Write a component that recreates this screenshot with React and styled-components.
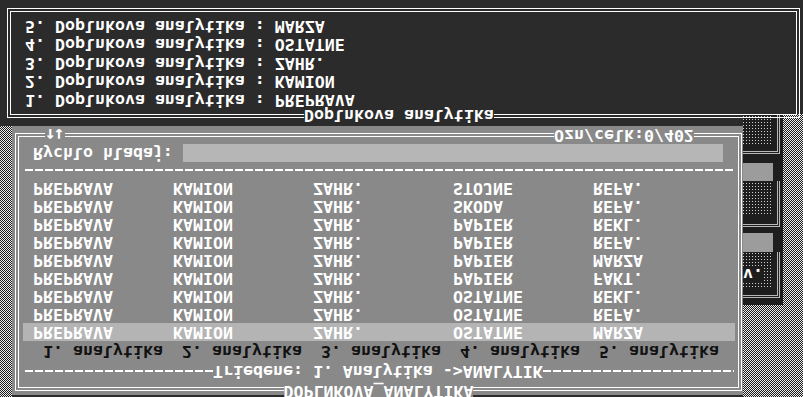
import React from "react";
import styled, { createGlobalStyle } from "styled-components";

const GlobalStyle = createGlobalStyle`
  html, body {
    margin: 0;
    padding: 0;
    background: #2b2b2b;
  }
  body {
    width: 803px;
    height: 397px;
    overflow: hidden;
  }
`;

const rows = [
  ["PREPRAVA", "KAMION", "ZAHR.", "OSTATNE", "MARZA"],
  ["PREPRAVA", "KAMION", "ZAHR.", "OSTATNE", "REFA."],
  ["PREPRAVA", "KAMION", "ZAHR.", "OSTATNE", "REKL."],
  ["PREPRAVA", "KAMION", "ZAHR.", "PAPIER", "FAKT."],
  ["PREPRAVA", "KAMION", "ZAHR.", "PAPIER", "MARZA"],
  ["PREPRAVA", "KAMION", "ZAHR.", "PAPIER", "REFA."],
  ["PREPRAVA", "KAMION", "ZAHR.", "PAPIER", "REKL."],
  ["PREPRAVA", "KAMION", "ZAHR.", "SKODA", "REFA."],
  ["PREPRAVA", "KAMION", "ZAHR.", "STOJNE", "REFA."],
];

const picked = ["PREPRAVA", "KAMION", "ZAHR.", "OSTATNE", "MARZA"];

const App = () => {
  return (
    <>
      <GlobalStyle />
      {/* the whole text screen is shown upside down */}
      <Screen>
        <Desktop>
          <Dither $w={12} />
          <Dialog>
            <Frame>
              <BorderTitle $top={-10} $center $bg="#898989">
                DOPLNKOVA_ANALYTIKA
              </BorderTitle>
              <FrameBody $pad="7px 0 0 0">
                <SortRow>
                  <DashRule $w={188} />
                  <span>Triedene: 1. Analytika -&gt;ANALYTIK</span>
                  <DashRule $grow />
                </SortRow>
                <HeaderRow>
                  {[1, 2, 3, 4, 5].map((n) => (
                    <span key={n}>{n}. analytika</span>
                  ))}
                </HeaderRow>
                <DataList>
                  {rows.map((r, i) => (
                    <DataRow key={i} $active={i === 0}>
                      {r.map((c, j) => (
                        <span key={j}>{c}</span>
                      ))}
                    </DataRow>
                  ))}
                </DataList>
                <DashRule $m="8px 4px 0 6px" />
                <SearchRow>
                  <SearchLabel>Rychlo hladaj:</SearchLabel>
                  <SearchField />
                </SearchRow>
              </FrameBody>
              <BorderTitle $bottom={-8} $left={29} $bg="#898989">
                <Arrows>↑↓</Arrows>
              </BorderTitle>
              <BorderTitle $bottom={-8} $left={538} $bg="#898989">
                Ozn/celk:0/402
              </BorderTitle>
            </Frame>
          </Dialog>
          <RightSide>
            <Dither $h={92} />
            <BackRow>
              <ButtonStack>
                <BackFrame $gap={7} $pad={8}>
                  <Patch $h={35}>
                    <PatchText>v.</PatchText>
                  </Patch>
                </BackFrame>
                <KeyBar $h={19} />
                <BackFrame $gap={6} $pad={10}>
                  <Patch $h={33} />
                </BackFrame>
                <KeyBar $h={18} />
                <BackFrame $gap={9} $pad={7}>
                  <Patch $h={30} />
                </BackFrame>
              </ButtonStack>
              <Dither $grow />
            </BackRow>
          </RightSide>
        </Desktop>
        <InfoPanel>
          <Frame>
            <BorderTitle $top={-7} $left={296} $bg="#2b2b2b">
              Doplnkova analytika
            </BorderTitle>
            <FrameBody $pad="5px 0 0 14px">
              {picked.map((v, i) => (
                <InfoLine key={i}>
                  {i + 1}. Doplnkova analytika : {v}
                </InfoLine>
              ))}
            </FrameBody>
          </Frame>
        </InfoPanel>
      </Screen>
    </>
  );
};

const Screen = styled.div`
  width: 803px;
  height: 397px;
  overflow: hidden;
  display: flex;
  flex-direction: column;
  background: #2b2b2b;
  color: #fff;
  font-family: "DejaVu Sans Mono", "Liberation Mono", monospace;
  font-size: 16.6px;
  font-weight: bold;
  line-height: 18px;
  white-space: pre;
  transform: scaleY(-1);
`;

const Desktop = styled.div`
  height: 271px;
  flex-shrink: 0;
  display: flex;
`;

const Dither = styled.div`
  flex: ${(p) => (p.$grow ? 1 : "none")};
  width: ${(p) => (p.$w ? `${p.$w}px` : "auto")};
  height: ${(p) => (p.$h ? `${p.$h}px` : "auto")};
  background-color: #1c1c1c;
  background-image: conic-gradient(
    #ececec 25%,
    transparent 0 50%,
    #ececec 0 75%,
    transparent 0
  );
  background-size: 2px 2px;
`;

const Dialog = styled.div`
  box-sizing: border-box;
  width: 731px;
  height: 269px;
  margin-top: 2px;
  padding: 4px 3px 7px 3px;
  background: #898989;
  display: flex;
`;

const Frame = styled.div`
  position: relative;
  flex: 1;
  display: flex;
  border: 1px solid #fff;
  padding: 2px;
`;

const FrameBody = styled.div`
  flex: 1;
  display: flex;
  flex-direction: column;
  border: 1px solid #fff;
  padding: ${(p) => p.$pad};
`;

const BorderTitle = styled.div`
  position: absolute;
  height: 18px;
  background: ${(p) => p.$bg};
  color: #fff;
  ${(p) => (p.$top !== undefined ? `top: ${p.$top}px;` : "")}
  ${(p) => (p.$bottom !== undefined ? `bottom: ${p.$bottom}px;` : "")}
  ${(p) =>
    p.$center
      ? "left: 50%; transform: translateX(-50%);"
      : `left: ${p.$left}px;`}
`;

const Arrows = styled.span`
  display: inline-block;
  width: 20px;
  height: 18px;
  font-size: 18px;
  line-height: 18px;
  letter-spacing: -2px;
`;

const SortRow = styled.div`
  display: flex;
  align-items: center;
  height: 18px;
  margin: 0 4px 0 6px;
`;

const DashRule = styled.div`
  flex: ${(p) => (p.$grow ? 1 : "none")};
  width: ${(p) => (p.$w ? `${p.$w}px` : "auto")};
  height: 2px;
  margin: ${(p) => p.$m || "0"};
  background: repeating-linear-gradient(
    90deg,
    #fff 0 8px,
    transparent 8px 10px
  );
`;

const HeaderRow = styled.div`
  display: grid;
  grid-template-columns: repeat(5, 139px);
  height: 18px;
  margin: 2px 0 0 24px;
  color: #111;
`;

const DataList = styled.div`
  display: flex;
  flex-direction: column;
  margin-top: 1px;
`;

const DataRow = styled.div`
  display: grid;
  grid-template-columns: repeat(5, 140px);
  height: 18px;
  margin: 0 3px 0 4px;
  padding-left: 10px;
  background: ${(p) => (p.$active ? "#b4b4b4" : "transparent")};
`;

const SearchRow = styled.div`
  display: flex;
  height: 18px;
  margin: 7px 0 0 14px;
`;

const SearchLabel = styled.span`
  width: 150px;
`;

const SearchField = styled.div`
  width: 540px;
  background: #b6b6b6;
`;

const RightSide = styled.div`
  width: 60px;
  display: flex;
  flex-direction: column;
`;

const BackRow = styled.div`
  flex: 1;
  display: flex;
`;

const ButtonStack = styled.div`
  width: 40px;
  overflow: hidden;
  background: #1e1e1e;
  display: flex;
  flex-direction: column;
`;

const BackFrame = styled.div`
  flex-shrink: 0;
  width: 34px;
  margin-top: ${(p) => p.$gap}px;
  padding-top: ${(p) => p.$pad}px;
  border-top: 3px double #b8b8b8;
  border-right: 3px double #b8b8b8;
`;

const Patch = styled.div`
  width: 29px;
  height: ${(p) => p.$h}px;
  padding-top: 4px;
  box-sizing: border-box;
  background-color: #1e1e1e;
  background-image: linear-gradient(to bottom, transparent 1px, #1e1e1e 1px),
    linear-gradient(to right, #d0d0d0 1px, transparent 1px);
  background-size: 3px 3px;
`;

const PatchText = styled.span`
  display: inline-block;
  height: 15px;
  line-height: 15px;
  background: #1e1e1e;
`;

const KeyBar = styled.div`
  flex-shrink: 0;
  width: 30px;
  height: ${(p) => p.$h}px;
  background: #9c9c9c;
`;

const InfoPanel = styled.div`
  box-sizing: border-box;
  height: 126px;
  flex-shrink: 0;
  padding: 8px 3px 8px 7px;
  display: flex;
`;

const InfoLine = styled.div`
  height: 18.5px;
  line-height: 18.5px;
`;

export default App;
